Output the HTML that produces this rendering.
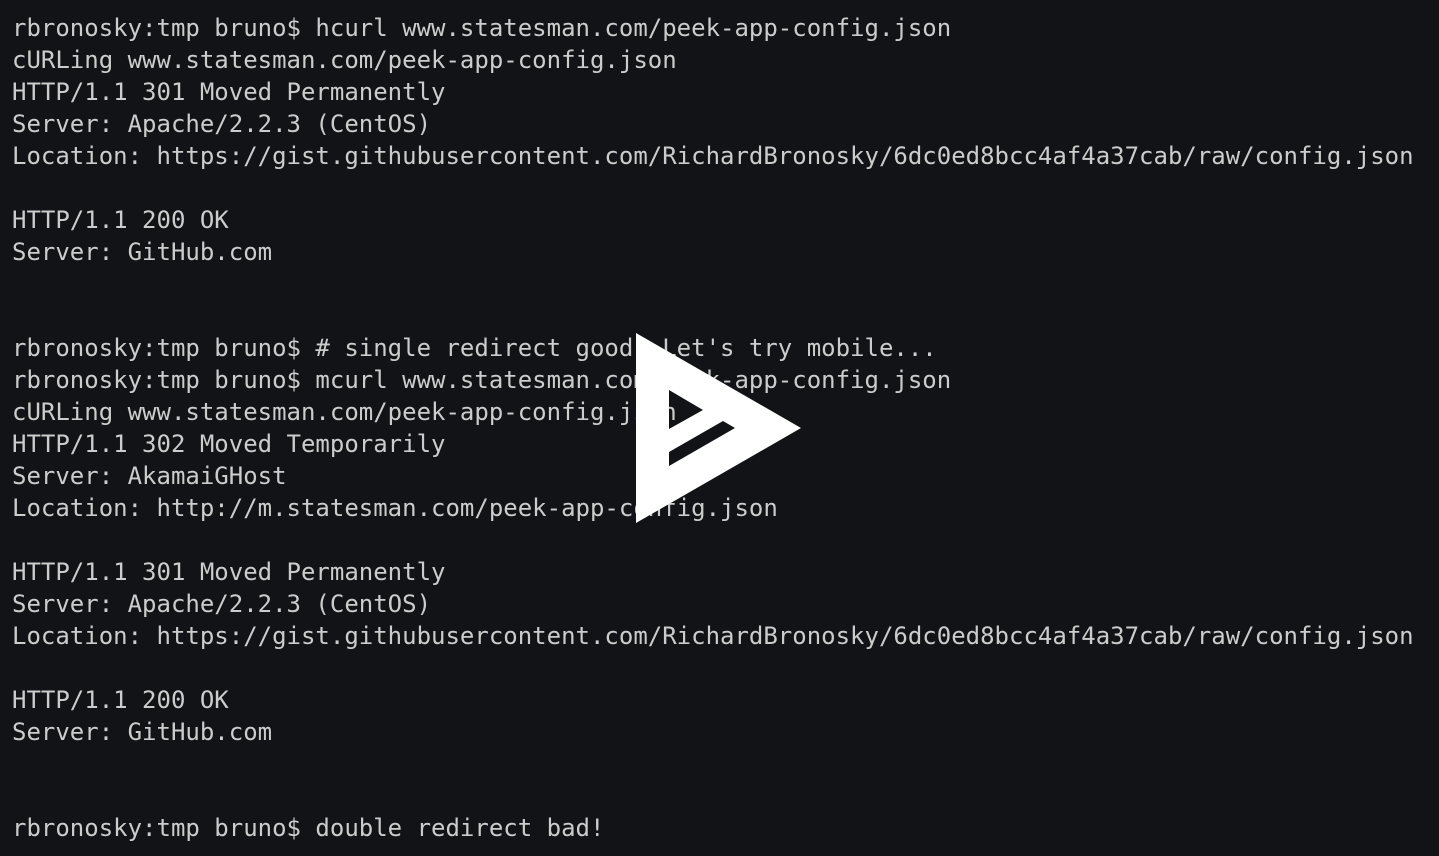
<!DOCTYPE html>
<html><head><meta charset="utf-8"><style>
html,body{margin:0;padding:0;background:#121316;width:1439px;height:856px;overflow:hidden}
pre{margin:0;padding:12px 0 0 12px;font-family:"DejaVu Sans Mono","Liberation Mono",monospace;font-size:24px;line-height:32px;color:#cccccc;white-space:pre}
svg{position:absolute;left:0;top:0}
</style></head><body>
<pre>rbronosky:tmp bruno$ hcurl www.statesman.com/peek-app-config.json
cURLing www.statesman.com/peek-app-config.json
HTTP/1.1 301 Moved Permanently
Server: Apache/2.2.3 (CentOS)
Location: https://gist.githubusercontent.com/RichardBronosky/6dc0ed8bcc4af4a37cab/raw/config.json

HTTP/1.1 200 OK
Server: GitHub.com


rbronosky:tmp bruno$ # single redirect good. Let's try mobile...
rbronosky:tmp bruno$ mcurl www.statesman.com/peek-app-config.json
cURLing www.statesman.com/peek-app-config.json
HTTP/1.1 302 Moved Temporarily
Server: AkamaiGHost
Location: http://m.statesman.com/peek-app-config.json

HTTP/1.1 301 Moved Permanently
Server: Apache/2.2.3 (CentOS)
Location: https://gist.githubusercontent.com/RichardBronosky/6dc0ed8bcc4af4a37cab/raw/config.json

HTTP/1.1 200 OK
Server: GitHub.com


rbronosky:tmp bruno$ double redirect bad!</pre>
<svg width="1439" height="856" viewBox="0 0 1439 856">
<path fill="#fff" fill-rule="evenodd" d="M636,333 L801,428 L636,523 Z M669,390 L703,410 L669,429 Z M669,452 L723,421 L735,428 L669,466 Z"/>
</svg>
</body></html>
